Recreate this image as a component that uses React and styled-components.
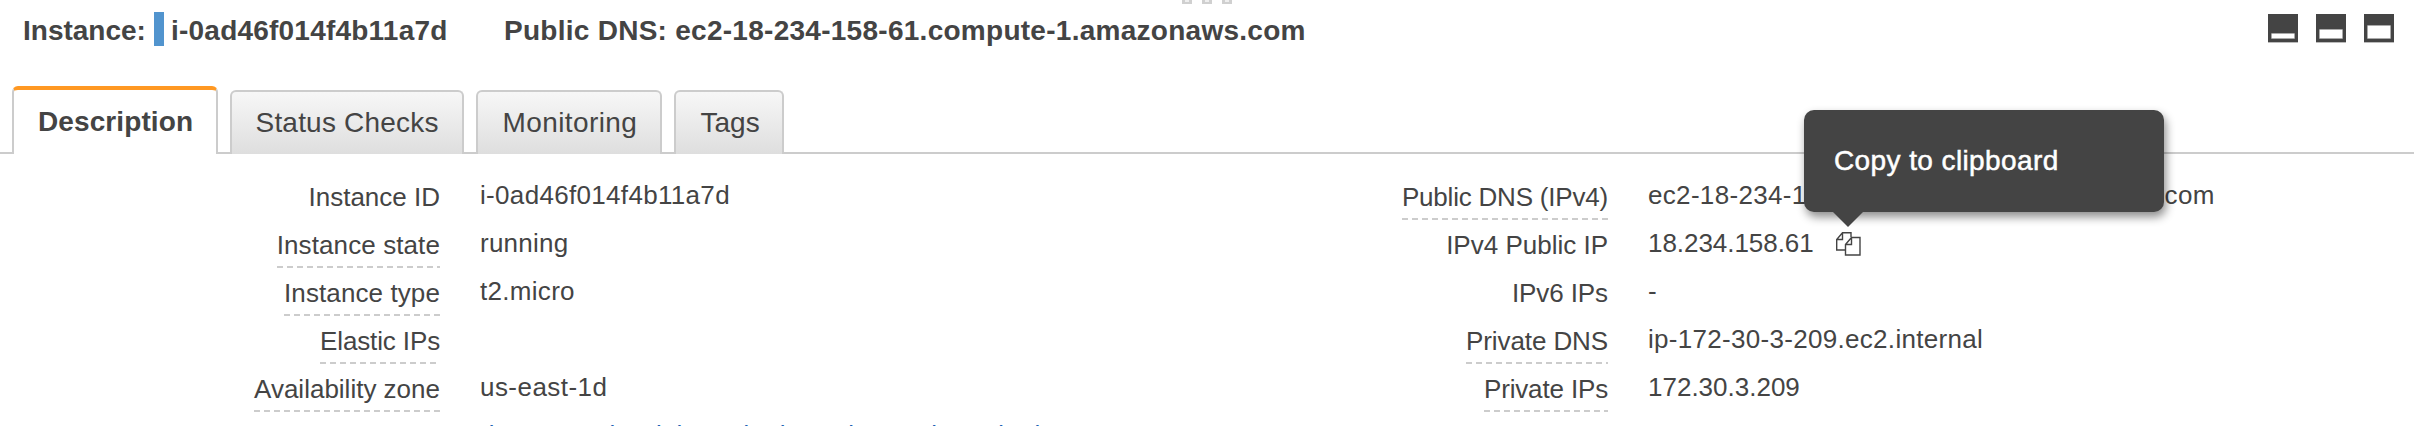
import React from "react";
import styled, { createGlobalStyle, css } from "styled-components";

const GlobalStyle = createGlobalStyle`
  *, *::before, *::after { box-sizing: border-box; }
  body {
    margin: 0;
    background: #fff;
    color: #444;
    font-family: "Liberation Sans", Arial, sans-serif;
    font-size: 26px;
    overflow: hidden;
  }
`;

const Panel = styled.main`
  height: 426px;
  overflow: hidden;
  display: flex;
  flex-direction: column;
`;

const DragHandle = styled.div`
  height: 4px;
  flex: none;
  display: flex;
  gap: 10px;
  padding-left: 1182px;
`;

const Grip = styled.span`
  width: 10px;
  height: 4px;
  border: solid #d0d0d0;
  border-width: 0 3px 2px;
  background: #efefef;
`;

const Header = styled.header`
  height: 82px;
  flex: none;
  display: flex;
  align-items: flex-start;
  padding: 8px 24px 0 23px;
`;

const Title = styled.strong`
  padding-top: 1px;
  font-size: 28px;
  line-height: 36px;
  white-space: nowrap;
  letter-spacing: ${(p) => p.$track}px;
  width: ${(p) => p.$width}px;
`;

const StateBar = styled.span`
  width: 10px;
  height: 34px;
  margin-right: 7px;
  background: #5194ce;
`;

const PaneSizes = styled.div`
  display: flex;
  gap: 18px;
  margin: 2px 0 0 auto;
`;

const PaneButton = styled.button`
  width: 30px;
  height: 29px;
  padding: 0 3px 3px;
  border: 0;
  border-bottom: 1px solid #bbb;
  background: #444;
  display: flex;
  align-items: flex-end;

  &::after {
    content: "";
    flex: 1;
    height: ${(p) => p.$fill}px;
    background: #fff;
    border: 1px solid #aaa;
    border-radius: 1px;
  }
`;

const TabBar = styled.nav`
  height: 68px;
  flex: none;
  display: flex;
  align-items: flex-end;
  gap: 12px;
  margin-right: 4px;
  padding-left: 12px;
  background: linear-gradient(#ccc, #ccc) bottom / 100% 2px no-repeat;
`;

const Tab = styled.button`
  width: ${(p) => p.$width}px;
  height: 64px;
  padding: 0 0 0 ${(p) => p.$pad}px;
  border: 2px solid #ccc;
  border-bottom: 0;
  border-radius: 6px 6px 0 0;
  background: linear-gradient(#f7f7f7, #dedede);
  color: #444;
  font: 28px/32px "Liberation Sans", Arial, sans-serif;
  letter-spacing: ${(p) => p.$track}px;
  text-align: left;
  white-space: nowrap;
  ${(p) =>
    p.$active &&
    css`
      height: 68px;
      border-top: 4px solid #ff9822;
      background: #fff;
      font-weight: bold;
    `}
`;

const Details = styled.section`
  display: grid;
  grid-template-columns: 1168px 1168px;
  padding-top: 20px;
`;

const Row = styled.div`
  display: grid;
  grid-template-columns: 440px 1fr;
  column-gap: 40px;
  height: 48px;
`;

const Label = styled.span`
  justify-self: end;
  height: 46px;
  padding-top: 8px;
  line-height: 30px;
  white-space: nowrap;
  letter-spacing: ${(p) => p.$track}px;
  ${(p) =>
    p.$hint &&
    css`
      background: repeating-linear-gradient(90deg, #ccc 0 6px, transparent 6px 10px) bottom / 100% 2px no-repeat;
    `}
`;

const Value = styled.span`
  display: flex;
  height: 36px;
  padding-top: 6px;
  line-height: 30px;
  white-space: pre;
  letter-spacing: ${(p) => p.$track}px;
`;

const RuleLink = styled.a`
  color: #1f63b5;
`;

const CopyButton = styled.span`
  position: relative;
  width: 25px;
  height: 24px;
  margin: 4px 0 0 auto;
  letter-spacing: 0.4px;
`;

const AddressSlot = styled.span`
  display: flex;
  width: 213px;
`;

const Tooltip = styled.span`
  position: absolute;
  left: -32px;
  bottom: 44px;
  width: 360px;
  height: 102px;
  padding: 33px 30px;
  border-radius: 10px;
  background: #444;
  color: #fff;
  font-size: 28px;
  line-height: 36px;
  -webkit-text-stroke: 0.5px #fff;
  box-shadow: 2px 5px 10px rgba(0, 0, 0, 0.45);

  &::after {
    content: "";
    position: absolute;
    left: 28px;
    top: 101px;
    border: solid transparent;
    border-width: 16px 16px 0;
    border-top-color: #444;
  }
`;

const TABS = [
  { text: "Description", width: 206, pad: 24, track: 0.1, active: true },
  { text: "Status Checks", width: 234, pad: 23.5, track: 0.2 },
  { text: "Monitoring", width: 186, pad: 24.5, track: 0.4 },
  { text: "Tags", width: 110, pad: 24.5, track: 0 },
];

const LEFT = [
  { label: "Instance ID", value: "i-0ad46f014f4b11a7d", vt: 0.32 },
  { label: "Instance state", lt: 0.1, hint: true, value: "running", vt: 0.25 },
  { label: "Instance type", lt: 0.1, hint: true, value: "t2.micro", vt: 0.3 },
  { label: "Elastic IPs", lt: -0.13, hint: true, value: "" },
  { label: "Availability zone", lt: 0, hint: true, value: "us-east-1d", vt: 0.45 },
  { label: "Security groups", lt: 0, hint: true, vt: 0.08, links: ["dev-rtsp", "view inbound rules", "view outbound rules"] },
];

const RIGHT = [
  { label: "Public DNS (IPv4)", lt: -0.2, hint: true, value: "ec2-18-234-158-61.compute-1.amazonaws.com", vt: 0.32 },
  { label: "IPv4 Public IP", value: "18.234.158.61", vt: -0.05, copy: true },
  { label: "IPv6 IPs", lt: -0.1, value: "-" },
  { label: "Private DNS", lt: -0.1, hint: true, value: "ip-172-30-3-209.ec2.internal", vt: 0.3 },
  { label: "Private IPs", lt: -0.15, hint: true, value: "172.30.3.209", vt: 0 },
];

function CopyIcon() {
  return (
    <svg width="25" height="24" viewBox="0 0 25 24" fill="none" stroke="#444" strokeWidth="1.4" style={{ display: "block" }}>
      <path d="M15 5V.7H6.5L.7 7.5V18H9.5M6.5.7V7.5H.7" />
      <path d="M9.5 12.5 15.5 5.5H24V23H9.5ZM15.5 5.5V12.5H9.5" />
    </svg>
  );
}

function DetailRow({ item }) {
  return (
    <Row>
      <Label $track={item.lt || 0} $hint={item.hint}>{item.label}</Label>
      <Value $track={item.vt || 0}>
        {item.links &&
          item.links.map((link, i) => (
            <React.Fragment key={link}>
              {i > 0 && ".  "}
              <RuleLink>{link}</RuleLink>
            </React.Fragment>
          ))}
        {item.copy ? (
          <AddressSlot>
            {item.value}
            <CopyButton>
              <CopyIcon />
              <Tooltip role="tooltip">Copy to clipboard</Tooltip>
            </CopyButton>
          </AddressSlot>
        ) : (
          item.value
        )}
      </Value>
    </Row>
  );
}

export default function App() {
  return (
    <>
      <GlobalStyle />
      <Panel>
        <DragHandle>
          <Grip />
          <Grip />
          <Grip />
        </DragHandle>
        <Header>
          <Title $track={0} $width={131}>Instance:</Title>
          <StateBar />
          <Title $track={0.22} $width={333}>i-0ad46f014f4b11a7d</Title>
          <Title $track={0.27}>Public DNS: ec2-18-234-158-61.compute-1.amazonaws.com</Title>
          <PaneSizes>
            <PaneButton $fill={6} aria-label="Small pane" />
            <PaneButton $fill={10} aria-label="Medium pane" />
            <PaneButton $fill={14} aria-label="Large pane" />
          </PaneSizes>
        </Header>
        <TabBar>
          {TABS.map((t) => (
            <Tab key={t.text} $width={t.width} $pad={t.pad} $track={t.track} $active={t.active}>
              {t.text}
            </Tab>
          ))}
        </TabBar>
        <Details>
          <div>{LEFT.map((item) => <DetailRow key={item.label} item={item} />)}</div>
          <div>{RIGHT.map((item) => <DetailRow key={item.label} item={item} />)}</div>
        </Details>
      </Panel>
    </>
  );
}
